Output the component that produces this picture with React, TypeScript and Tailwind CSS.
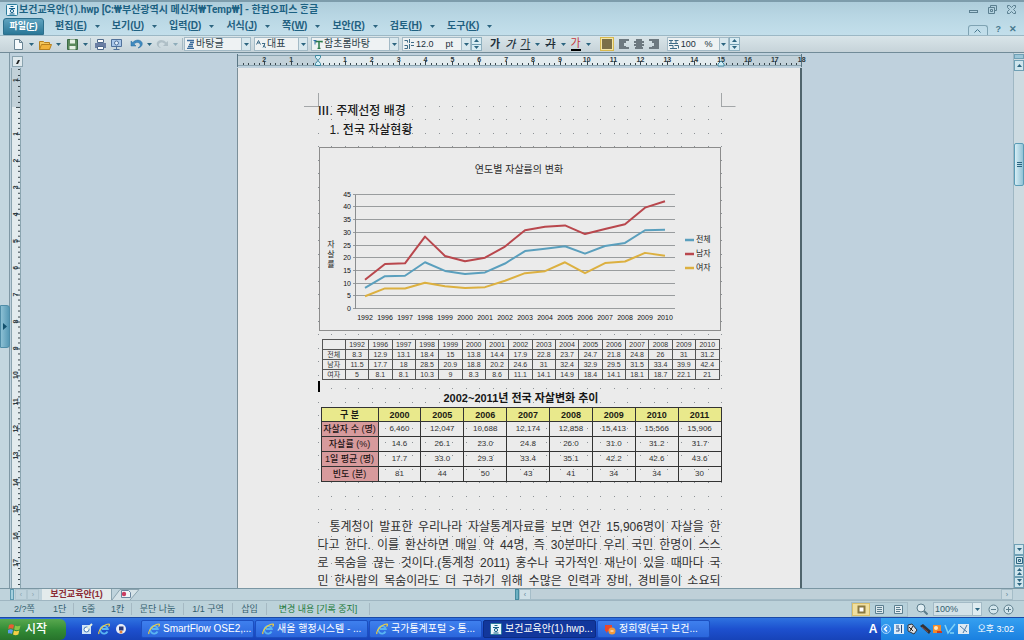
import type { ReactNode } from "react";
import clsx from "clsx";

const years = ["1992", "1996", "1997", "1998", "1999", "2000", "2001", "2002", "2003", "2004", "2005", "2006", "2007", "2008", "2009", "2010"];

const series = [
  { name: "전체", color: "#5a9fbd", values: [8.3, 12.9, 13.1, 18.4, 15, 13.8, 14.4, 17.9, 22.8, 23.7, 24.7, 21.8, 24.8, 26, 31, 31.2] },
  { name: "남자", color: "#b9474d", values: [11.5, 17.7, 18, 28.5, 20.9, 18.8, 20.2, 24.6, 31, 32.4, 32.9, 29.5, 31.5, 33.4, 39.9, 42.4] },
  { name: "여자", color: "#dcb040", values: [5, 8.1, 8.1, 10.3, 9, 8.3, 8.6, 11.1, 14.1, 14.9, 18.4, 14.1, 18.1, 18.7, 22.1, 21] },
];

const trendYears = ["2000", "2005", "2006", "2007", "2008", "2009", "2010", "2011"];
const trendRows = [
  { label: "자살자 수 (명)", values: ["6,460", "12,047", "10,688", "12,174", "12,858", "15,413", "15,566", "15,906"] },
  { label: "자살률 (%)", values: ["14.6", "26.1", "23.0", "24.8", "26.0", "31.0", "31.2", "31.7"] },
  { label: "1일 평균 (명)", values: ["17.7", "33.0", "29.3", "33.4", "35.1", "42.2", "42.6", "43.6"] },
  { label: "빈도 (분)", values: ["81", "44", "50", "43", "41", "34", "34", "30"] },
];

const menus = [
  ["편집", "E"],
  ["보기", "U"],
  ["입력", "D"],
  ["서식", "J"],
  ["쪽", "W"],
  ["보안", "R"],
  ["검토", "H"],
  ["도구", "K"],
];

const bodyLines = [
  "통계청이 발표한 우리나라 자살통계자료를 보면 연간 15,906명이 자살을 한",
  "다고 한다. 이를 환산하면 매일 약 44명, 즉 30분마다 우리 국민 한명이 스스",
  "로 목숨을 끊는 것이다.(통계청 2011) 홍수나 국가적인 재난이 있을 때마다 국",
  "민 한사람의 목숨이라도 더 구하기 위해 수많은 인력과 장비, 경비들이 소요되",
];

// one ruler centimetre on screen
const UNIT = 26.87;

function Arrow({ up = false, className = "" }: { up?: boolean; className?: string }) {
  return (
    <svg viewBox="0 0 5 3" className={clsx("h-[3px] w-[5px] shrink-0 fill-[#2c6580]", className)}>
      <path d={up ? "M0 3h5L2.5 0z" : "M0 0h5L2.5 3z"} />
    </svg>
  );
}

function HwpIcon() {
  return (
    <svg viewBox="0 0 12 12" className="h-3 w-3 shrink-0">
      <rect x=".5" y=".5" width="11" height="11" rx="1" fill="#e9f6fb" stroke="#2b7c9d" />
      <path d="M4.500 2.500h3M3 4.500h6M3.500 10h5" stroke="#14608a" fill="none" />
      <circle cx="6" cy="7" r="1.600" fill="none" stroke="#14608a" />
    </svg>
  );
}

function TitleBar() {
  return (
    <header className="flex h-[17px] items-center border-t-2 border-[#7d9cab] bg-gradient-to-b from-[#aecddb] to-[#b9d7e4] pr-2 pl-[6px]">
      <HwpIcon />
      <h1 className="ml-px font-['Roboto','Noto_Sans_CJK_KR',sans-serif] text-[10px] leading-3 font-bold whitespace-nowrap text-[#1c6182]">
        보건교육안(1).hwp [C:₩부산광역시 메신저₩Temp₩] - 한컴오피스 ᄒᆞᆫ글
      </h1>
      <div className="ml-auto flex items-center gap-[10px]">
        <button aria-label="최소화">
          <svg viewBox="0 0 9 9" className="h-[9px] w-[9px] fill-none stroke-[#5b7f90]">
            <rect x=".5" y="5.5" width="8" height="2" />
          </svg>
        </button>
        <button aria-label="이전 크기로">
          <svg viewBox="0 0 9 9" className="h-[9px] w-[9px] fill-none stroke-[#5b7f90]">
            <path d="M2.5 2.5v-2h6v5h-2M.5 2.5h6v6h-6zM2.5 4.5h2v2h-2z" />
          </svg>
        </button>
        <button aria-label="닫기">
          <svg viewBox="0 0 9 9" className="h-[9px] w-[9px] fill-none stroke-[#5b7f90]">
            <path d="M.5 .5h2l2 2 2-2h2v2l-2 2 2 2v2h-2l-2-2-2 2h-2v-2l2-2-2-2z" />
          </svg>
        </button>
      </div>
    </header>
  );
}

function MenuBar() {
  return (
    <nav className="flex h-[18px] items-center bg-gradient-to-b from-[#b9d7e4] to-[#c3dfeb] pr-[7px] pl-[3px] text-[10px] leading-3 font-semibold text-[#1f6080]">
      <button className="h-[17px] w-[41px] rounded-t-[3px] border border-[#2c6f8c] bg-gradient-to-b from-[#5ea3c0] to-[#2a7898] text-[9px] text-white">
        파일(<u>F</u>)
      </button>
      <div className="ml-[11px] flex gap-3">
        {menus.map(([name, key]) => (
          <button key={key} className="flex items-center gap-2 whitespace-nowrap">
            <span>
              {name}(<u>{key}</u>)
            </span>
            <Arrow />
          </button>
        ))}
      </div>
      <div className="ml-auto flex items-end gap-2 self-stretch text-[#47788e]">
        <button aria-label="도구 상자 접기" className="flex h-[10px] w-[20px] items-center justify-center rounded-t-[3px] border border-b-0 border-[#7fa3b3]">
          <svg viewBox="0 0 7 4" className="h-1 w-[7px] fill-none stroke-[#47788e]">
            <path d="M.5 3.5l3-3 3 3" />
          </svg>
        </button>
        <button className="text-[9px] leading-3">?</button>
        <button aria-label="문서 닫기" className="text-[9px] leading-3">
          ✕
        </button>
      </div>
    </nav>
  );
}

function Separator() {
  return <span className="h-3 w-px shrink-0 bg-[#a5b9c3]" />;
}

function IconButton({ label, arrow = false, dim = false, children }: { label: string; arrow?: boolean; dim?: boolean; children: ReactNode }) {
  return (
    <button aria-label={label} className={clsx("flex shrink-0 items-center gap-1", dim && "opacity-40")}>
      <svg viewBox="0 0 13 13" className="h-[13px] w-[13px]">
        {children}
      </svg>
      {arrow && <Arrow />}
    </button>
  );
}

function Combo({ label, value, icon, className }: { label: string; value: string; icon: ReactNode; className: string }) {
  return (
    <label className={clsx("flex h-[14px] shrink-0 items-center border border-[#a3bac6] bg-[#eef2f3] pl-px", className)}>
      {icon}
      <select aria-label={label} className="min-w-0 flex-1 appearance-none bg-transparent pl-px text-[10px] leading-3 text-[#2d3f49] outline-none">
        <option>{value}</option>
      </select>
      <span className="flex h-full w-[9px] items-center justify-center border-l border-[#a3bac6] bg-[#d8e8ee]">
        <Arrow />
      </span>
    </label>
  );
}

function Spinner({ label }: { label: string }) {
  return (
    <div className="flex h-[14px] w-[11px] shrink-0 flex-col border border-[#8fb0bf] bg-[#d8ecf3]">
      <button aria-label={label + " 늘리기"} className="flex flex-1 items-center justify-center border-b border-[#6f9cb0]">
        <Arrow up />
      </button>
      <button aria-label={label + " 줄이기"} className="flex flex-1 items-center justify-center">
        <Arrow />
      </button>
    </div>
  );
}

function ToolBar() {
  return (
    <div className="flex h-[18px] items-center border-t border-b border-t-[#9cb8c5] border-b-[#718b98] bg-gradient-to-b from-[#d9e5e9] to-[#c6d3d9] pl-3 text-[#22303a]">
      <div className="flex items-center gap-[5px]">
        <IconButton label="새 문서" arrow>
          <path d="M2.5 1.5h5l3 3v7h-8zM7.5 1.5v3h3" fill="#f6fafc" stroke="#6a8494" />
        </IconButton>
        <IconButton label="불러오기" arrow>
          <path d="M.5 3.5h4l1 1h5v7h-10z" fill="#f3c65c" stroke="#b6801f" />
          <path d="M.5 11.5l2-5h10l-2 5z" fill="#f0b23a" stroke="#b6801f" />
        </IconButton>
        <IconButton label="저장하기" arrow>
          <path d="M1.5 1.5h10v10h-10z" fill="#5c8a5d" stroke="#3b6a45" />
          <path d="M4 1.5h5v4H4zM3.5 8h6v3.5h-6z" fill="#e7f1e6" />
        </IconButton>
      </div>
      <div className="ml-[2px] flex items-center gap-[3px]">
        <Separator />
        <IconButton label="인쇄">
          <path d="M3.5 1.5h6v3h-6z" fill="#fff" stroke="#4e6a8c" />
          <path d="M1 5h11v5H1z" fill="#6b7fa4" />
          <path d="M3.5 8.5h6v3h-6z" fill="#fff" stroke="#4e6a8c" />
        </IconButton>
        <IconButton label="미리 보기">
          <path d="M1.500 1.500h10v7h-10z" fill="#a9c7ea" stroke="#50719b" />
          <circle cx="6.500" cy="5" r="2" fill="#e7f2fc" stroke="#50719b" />
          <path d="M3.500 11.500h6M6.500 9v2" stroke="#50719b" />
        </IconButton>
      </div>
      <div className="ml-[7px] flex items-center gap-1">
        <IconButton label="되돌리기" arrow>
          <path d="M1 3v5h5L4 6c2-2 5-2 6 0s-1 3-2 4c3-.5 5-3 4-5.500C10.500 1.500 6 1 2.800 4.500z" fill="#3f8ac0" stroke="#246a9c" strokeWidth=".5" />
        </IconButton>
        <IconButton label="다시 실행" arrow dim>
          <path d="M12 3v5H7l2-2c-2-2-5-2-6 0s1 3 2 4c-3-.5-5-3-4-5.500C2.500 1.500 7 1 10.200 4.500z" fill="#7f949f" />
        </IconButton>
        <Separator />
      </div>
      <div className="ml-px flex items-center gap-[3px]">
        <Combo
          label="스타일"
          value="바탕글"
          className="w-[67px]"
          icon={
            <svg viewBox="0 0 9 10" className="h-[10px] w-[9px]">
              <path d="M1 1.500h7M4 3.500h4M3 5.500h4M2 7.500h5M1 9.500h7" stroke="#3b6c9c" strokeWidth="1.500" fill="none" />
            </svg>
          }
        />
        <Combo
          label="언어"
          value="대표"
          className="w-[54px]"
          icon={
            <svg viewBox="0 0 10 10" className="h-[10px] w-[10px] fill-none stroke-[#3d6b86]">
              <path d="M.5 5.500l2-4 2 4M1.500 4h2M6 4.500h3l-2 4M8 6l1.500 3" />
            </svg>
          }
        />
        <Combo
          label="글꼴"
          value="함초롬바탕"
          className="w-[88px]"
          icon={
            <svg viewBox="0 0 10 10" className="h-[10px] w-[10px] fill-none">
              <path d="M3 3.500v-1h6v1M6 2.500v7M4.500 9.500h3" stroke="#2c7a4b" strokeWidth="1.500" />
              <path d="M.5 1.500h3M2 1.500v4" stroke="#2f6fa8" />
            </svg>
          }
        />
        <div className="flex">
          <label className="flex h-[14px] w-[69px] items-center border border-[#a3bac6] bg-[#eef2f3] pl-px text-[9px] leading-3">
            <svg viewBox="0 0 10 10" className="h-[10px] w-[10px] shrink-0 fill-none stroke-[#3d6b86]">
              <path d="M.5 1.500h3v2M5.500 0v4M.5 6.500h3v3h-3M7 3.500h3M7 6.500h3M5.500 5v5" />
            </svg>
            <input aria-label="글자 크기" defaultValue="12.0" className="w-[22px] min-w-0 bg-transparent pl-[2px] outline-none" />
            <span className="ml-auto pr-2">pt</span>
            <span className="flex h-full w-[9px] items-center justify-center border-l border-[#a3bac6] bg-[#d8e8ee]">
              <Arrow />
            </span>
          </label>
          <Spinner label="글자 크기" />
        </div>
      </div>
      <div className="ml-2 flex items-center gap-[5px] text-[11px] leading-[13px]">
        <button className="font-bold">가</button>
        <button className="font-medium italic">가</button>
        <button className="flex items-center gap-[5px]">
          <span className="underline">가</span>
          <Arrow />
        </button>
        <button className="flex items-center gap-[5px]">
          <span className="font-medium line-through">가</span>
          <Arrow />
        </button>
        <button className="flex items-center gap-[5px]">
          <span className="border-b-2 border-black leading-[11px] text-[#c43a3f]">가</span>
          <Arrow />
        </button>
      </div>
      <div className="ml-[9px] flex items-center gap-[5px]">
        <button aria-label="양쪽 정렬" className="border border-[#d8b94e] bg-[#f3e6a6] p-px">
          <svg viewBox="0 0 10 10" className="h-[10px] w-[10px]">
            <path d="M0 0h10v10H0z" fill="#7b7048" />
          </svg>
        </button>
        <button aria-label="왼쪽 정렬">
          <svg viewBox="0 0 10 10" className="h-[10px] w-[10px] fill-[#6d7980]">
            <path d="M0 0h10v2H7v2H5v3h2v1h3v2H0z" />
          </svg>
        </button>
        <button aria-label="가운데 정렬">
          <svg viewBox="0 0 10 10" className="h-[10px] w-[10px] fill-[#6d7980]">
            <path d="M2 0h6v2h2v2H8v1h2v2H8v1h1v2H1V8h1V7H0V5h2V4H0V2h2z" />
          </svg>
        </button>
        <button aria-label="오른쪽 정렬">
          <svg viewBox="0 0 10 10" className="h-[10px] w-[10px] fill-[#6d7980]">
            <path d="M10 0H0v2h3v2h2v3H3v1H0v2h10z" />
          </svg>
        </button>
        <div className="ml-[3px] flex">
          <label className="flex h-[14px] w-[62px] items-center border border-[#a3bac6] bg-[#eef2f3] pl-px text-[9px] leading-3">
            <svg viewBox="0 0 10 10" className="h-[10px] w-[10px] shrink-0 fill-none stroke-[#3d6b86]">
              <path d="M0 1.500h4M5.500 1.500h4M2 1.500v3M7 1.500v3M0 4.500h9M0 6.500h4v3M5.500 6.500h4v3M1 9.500h7" />
            </svg>
            <input aria-label="줄 간격" defaultValue="100" className="w-[20px] min-w-0 bg-transparent pl-[2px] outline-none" />
            <span className="ml-auto pr-[6px]">%</span>
            <span className="flex h-full w-[9px] items-center justify-center border-l border-[#a3bac6] bg-[#d8e8ee]">
              <Arrow />
            </span>
          </label>
          <Spinner label="줄 간격" />
        </div>
      </div>
    </div>
  );
}

function HorizontalRuler() {
  const labels = Array.from({ length: 21 }, (_, i) => i - 2);
  const ticks = Array.from({ length: 105 }, (_, i) => i - 15);
  return (
    <svg viewBox="0 0 572 13" className="block h-[13px] w-[572px]">
      <path d="M0 2h565v9H0z" fill="#c2d1d9" />
      <path d="M81 2h403v9H81z" fill="#e3ebee" />
      <path d="M0 1.500h565M0 11.500h565" stroke="#8ba4b0" />
      {ticks.map((t) => (
        <rect key={t} x={Math.round(81 + (t * UNIT) / 5)} y={t % 5 === 0 ? 7 : 9} width="1" height={t % 5 === 0 ? 4 : 2} fill="#38454c" />
      ))}
      <path d="M.5 0v13M564.500 0v13" stroke="#5a7684" />
      {labels
        .filter((n) => n !== 0)
        .map((n) => (
          <text key={n} x={81 + n * UNIT} y="8" textAnchor="middle" fontSize="7" fontWeight="600" fill="#2c3940">
            {Math.abs(n)}
          </text>
        ))}
      <path d="M78.500 1.500h5v2l-2.500 3-2.500-3zM78.500 11.500h5v-2l-2.500-3-2.500 3zM484 7l3 3v2h-6v-2z" fill="#d4eef6" stroke="#3d869e" />
    </svg>
  );
}

function VerticalRuler() {
  const labels = Array.from({ length: 19 }, (_, i) => i - 1);
  const ticks = Array.from({ length: 97 }, (_, i) => i - 7);
  return (
    <svg viewBox="0 0 12 521" className="block h-[521px] w-3">
      <path d="M2 0h8v521H2z" fill="#e3ebee" />
      <path d="M2 0h8v39H2z" fill="#c2d1d9" />
      <path d="M1.500 0v521M10.500 0v521" stroke="#8ba4b0" />
      {ticks.map((t) => (
        <rect key={t} x={t % 5 === 0 ? 6 : 8} y={Math.round(39 + (t * UNIT) / 5)} width={t % 5 === 0 ? 4 : 2} height="1" fill="#38454c" />
      ))}
      {labels
        .filter((n) => n !== 0)
        .map((n) => (
          <text key={n} transform={`translate(8 ${39 + n * UNIT}) rotate(-90)`} textAnchor="middle" fontSize="7" fontWeight="600" fill="#2c3940">
            {Math.abs(n)}
          </text>
        ))}
    </svg>
  );
}

// layout grid dots and the corner marks of the text area
function PageGrid() {
  const rows = Array.from({ length: 36 }, (_, i) => i);
  const cols = Array.from({ length: 31 }, (_, i) => i);
  return (
    <svg viewBox="0 0 562 520" className="pointer-events-none absolute top-0 left-0 h-[520px] w-[562px]">
      {rows.map((r) =>
        cols.map((c) => (
          <rect key={r + "-" + c} x={Math.round(80 + (c * UNIT) / 2)} y={Math.round(38 + (r * UNIT) / 2)} width="1" height="1" fill="#8d9296" />
        ))
      )}
      <path d="M80.500 25v13.500M66 38.500h14M483.500 25v13.500h14" stroke="#a3a6a8" fill="none" />
    </svg>
  );
}

function Chart() {
  const px = (i: number) => 47 + i * 20;
  const py = (v: number) => 162 - v * 2.54;
  return (
    <svg viewBox="0 0 403 184" className="block h-[184px] w-full">
      <rect x="1.500" y=".5" width="401" height="183" fill="#ebebeb" stroke="#8c8c8c" />
      <text x="201" y="26" textAnchor="middle" fontSize="10" fill="#2b2b2b">
        연도별 자살률의 변화
      </text>
      {Array.from({ length: 10 }, (_, i) => i * 5).map((v) => (
        <g key={v}>
          <path d={`M35 ${Math.round(py(v)) - 0.5}H357`} stroke="#999c9e" />
          <text x="33" y={py(v) + 2} textAnchor="end" fontSize="7" fill="#111">
            {v}
          </text>
        </g>
      ))}
      <path d="M37.500 48v114" stroke="#8a8d8f" />
      {years.map((y, i) => (
        <text key={y} x={px(i)} y="173" textAnchor="middle" fontSize="7" fill="#111">
          {y}
        </text>
      ))}
      {["자", "살", "률"].map((c, i) => (
        <text key={c} x="13" y={100 + i * 10} textAnchor="middle" fontSize="8" fill="#222">
          {c}
        </text>
      ))}
      {series.map((s, k) => (
        <g key={s.name}>
          <polyline points={s.values.map((v, i) => `${px(i)},${py(v)}`).join(" ")} fill="none" stroke={s.color} strokeWidth="2" strokeLinejoin="round" />
          <path d={`M367 ${93 + k * 14}h9`} stroke={s.color} strokeWidth="2.500" />
          <text x="378" y={95 + k * 14} fontSize="8" fill="#222">
            {s.name}
          </text>
        </g>
      ))}
    </svg>
  );
}

function DataTable() {
  return (
    <table className="ml-1 w-[398px] table-fixed border-collapse bg-[#ebebeb] text-center text-[7px] leading-[9px] text-[#333]">
      <thead>
        <tr>
          <td className="h-[10px] border border-[#555] p-0"></td>
          {years.map((y) => (
            <th key={y} scope="col" className="border border-[#555] p-0 font-normal">
              {y}
            </th>
          ))}
        </tr>
      </thead>
      <tbody>
        {series.map((s) => (
          <tr key={s.name}>
            <th scope="row" className="h-[10px] border border-[#555] p-0 font-normal">
              {s.name}
            </th>
            {s.values.map((v, i) => (
              <td key={i} className="border border-[#555] p-0">
                {v}
              </td>
            ))}
          </tr>
        ))}
      </tbody>
    </table>
  );
}

function TrendTable() {
  return (
    <table className="ml-[3px] w-[401px] table-fixed border-collapse text-center text-[8px] leading-[12px] text-[#333]">
      <caption className="h-[18px] text-[11px] leading-[18px] font-bold text-[#161616]">2002~2011년 전국 자살변화 추이</caption>
      <thead>
        <tr className="bg-[#e9e98c] text-[9px] text-[#1c1c14]">
          <th scope="col" className="h-[14px] w-[57px] border border-[#333] p-0 font-semibold">
            구 분
          </th>
          {trendYears.map((y) => (
            <th key={y} scope="col" className="border border-[#333] p-0 font-bold">
              {y}
            </th>
          ))}
        </tr>
      </thead>
      <tbody>
        {trendRows.map((row) => (
          <tr key={row.label}>
            <th scope="row" className="h-[15px] border border-[#333] bg-[#d79a9c] p-0 text-[9px] font-medium whitespace-nowrap text-[#1c1414]">
              {row.label}
            </th>
            {row.values.map((v, i) => (
              <td key={i} className="border border-[#333] p-0">
                {v}
              </td>
            ))}
          </tr>
        ))}
      </tbody>
    </table>
  );
}

function Page() {
  return (
    <article className="relative min-h-0 w-[565px] flex-1 overflow-hidden border-r-2 border-l border-r-[#50656d] border-l-[#7b8f99] bg-[#ebebeb] pr-[79px] pl-[80px]">
      <PageGrid />
      <div className="relative">
        <h2 className="pt-[34px] text-[12px] leading-[19px] font-medium text-[#1b1b1b]">Ⅲ. 주제선정 배경</h2>
        <h3 className="pl-3 text-[12px] leading-[19px] font-medium text-[#1b1b1b]">1. 전국 자살현황</h3>
        <div className="pt-[7px] pb-2">
          <Chart />
        </div>
        <DataTable />
        <div className="mt-px h-[11px] w-[2px] bg-black"></div>
        <div className="-mt-[3px]">
          <TrendTable />
        </div>
        <div className="pt-9 text-[12px] leading-[18px] text-[#303030]">
          {bodyLines.map((line, i) => (
            <p key={i} className={clsx("whitespace-nowrap [text-align-last:justify]", i === 0 && "pl-3")}>
              {line}
            </p>
          ))}
        </div>
      </div>
    </article>
  );
}

function ScrollButton({ label, children }: { label: string; children: ReactNode }) {
  return (
    <button aria-label={label} className="flex h-[11px] w-full shrink-0 items-center justify-center border border-[#6fa0b5] bg-[#cfe5ed]">
      {children}
    </button>
  );
}

function VerticalScroll() {
  return (
    <div className="flex w-[11px] shrink-0 flex-col border-l border-[#9fb7c3] bg-[#cddbe1]">
      <div className="my-px h-[5px] border border-[#6fa0b5] bg-[#9cc6d8]"></div>
      <ScrollButton label="위로">
        <Arrow up />
      </ScrollButton>
      <button aria-label="스크롤 막대" className="mt-[72px] flex h-[43px] items-center justify-center rounded-[2px] border border-[#5a9cb6] bg-gradient-to-r from-[#d5edf5] to-[#92c3d6]">
        <svg viewBox="0 0 5 5" className="h-[5px] w-[5px] stroke-[#2c6580]">
          <path d="M0 .5h5M0 2.500h5M0 4.500h5" />
        </svg>
      </button>
      <div className="mt-auto">
        <ScrollButton label="아래로">
          <Arrow />
        </ScrollButton>
        <ScrollButton label="찾기 대상">
          <svg viewBox="0 0 7 7" className="h-[7px] w-[7px] fill-none stroke-[#2c6580]">
            <path d="M.5 .5h6v6h-6zM2.500 2.500h2v2h-2z" />
          </svg>
        </ScrollButton>
        <ScrollButton label="이전 쪽">
          <span className="flex flex-col gap-px">
            <Arrow up />
            <Arrow up />
          </span>
        </ScrollButton>
        <ScrollButton label="다음 쪽">
          <span className="flex flex-col gap-px">
            <Arrow />
            <Arrow />
          </span>
        </ScrollButton>
      </div>
    </div>
  );
}

function Workspace() {
  return (
    <main className="flex min-h-0 flex-1 overflow-hidden bg-[#bfd1dd]">
      <div className="w-[10px] shrink-0 border-r border-[#7f98a5] bg-[#c3d6df] pt-[252px]">
        <button aria-label="작업 창 펼치기" className="flex h-[43px] w-[10px] items-center justify-center rounded-r-[3px] border border-[#4f8da8] bg-gradient-to-r from-[#8cc0d4] to-[#5799b5]">
          <svg viewBox="0 0 4 7" className="h-[7px] w-1 fill-[#12506c]">
            <path d="M0 0v7l4-3.500z" />
          </svg>
        </button>
      </div>
      <div className="flex w-[13px] shrink-0 flex-col overflow-hidden">
        <button aria-label="탭 종류" className="mt-[3px] mb-px flex h-[11px] w-[11px] shrink-0 items-center justify-center self-end border border-[#8ba4b0] bg-[#dfe9ed]">
          <svg viewBox="0 0 4 4" className="h-1 w-1 fill-[#222]">
            <path d="M0 4h2l2-4H2z" />
          </svg>
        </button>
        <VerticalRuler />
      </div>
      <div className="flex min-w-0 flex-1 flex-col items-center overflow-hidden pl-[2px]">
        <div className="py-px pl-[7px]">
          <HorizontalRuler />
        </div>
        <Page />
      </div>
      <VerticalScroll />
    </main>
  );
}

function DocumentTabs() {
  return (
    <div className="flex h-3 items-stretch border-t border-[#7a96a3] bg-[#bfd3dc] pl-[10px]">
      <span className="w-1 border border-[#5f9ab0] bg-[#a5d0de]"></span>
      <button aria-label="이전 탭" className="ml-px w-3 border border-[#b0c6d0] text-[7px] leading-[8px] text-[#87a2af]">
        ‹
      </button>
      <button aria-label="다음 탭" className="w-3 border border-[#b0c6d0] text-[7px] leading-[8px] text-[#87a2af]">
        ›
      </button>
      <button className="ml-[3px] w-[70px] border-r border-[#8ba4b0] bg-[#e3ebec] text-[9px] leading-[11px] font-bold whitespace-nowrap text-[#8b2c34]">보건교육안(1)</button>
      <button aria-label="새 탭">
        <svg viewBox="0 0 28 11" className="h-[11px] w-[28px]">
          <path d="M0 11L8 .5h19L18 11" fill="#d5e2e7" stroke="#8ba4b0" />
          <path d="M9.500 1.500h7l2 2v5h-9z" fill="#f0f5f8" stroke="#6a86a0" />
          <circle cx="12" cy="5" r="2.200" fill="#c93c62" />
        </svg>
      </button>
      <div className="ml-auto flex w-[509px] items-stretch pr-[11px]">
        <span className="w-1 border border-[#458b9f] bg-[#6cb0c2]"></span>
        <button aria-label="왼쪽으로" className="w-3 border border-[#a5bdc8] bg-[#cfe0e7] text-[7px] leading-[8px] text-[#5b8294]">
          ‹
        </button>
        <div className="flex-1 border-b border-[#a5bdc8] bg-[#bfd0d8]"></div>
        <button aria-label="오른쪽으로" className="w-3 border border-[#a5bdc8] bg-[#c8d9e0] text-[7px] leading-[8px] text-[#5b8294]">
          ›
        </button>
      </div>
    </div>
  );
}

function StatusBar() {
  return (
    <footer className="flex h-[17px] items-center border-t border-[#9fb6c1] bg-[#bcd2da] pr-[10px] pl-[14px] text-[9px] leading-3 whitespace-nowrap text-[#34606f]">
      <span className="w-[39px]">2/?쪽</span>
      <span className="w-5">1단</span>
      <Separator />
      <span className="w-[37px] pl-2">5줄</span>
      <span className="w-[20px]">1칸</span>
      <Separator />
      <span className="w-[51px] text-center">문단 나눔</span>
      <Separator />
      <span className="w-[48px] text-center">1/1 구역</span>
      <Separator />
      <span className="w-[33px] text-center">삽입</span>
      <Separator />
      <span className="w-[102px] text-center text-[#237a3b]">변경 내용 [기록 중지]</span>
      <Separator />
      <div className="ml-auto flex items-center">
        <div className="flex border border-[#a5bdc8] bg-[#b6d0da]">
          <button aria-label="쪽 윤곽" className="flex h-[13px] w-[18px] items-center justify-center border border-[#d9bf6a] bg-[#f0dfa0]">
            <svg viewBox="0 0 9 9" className="h-[9px] w-[9px]">
              <path d="M.5 .5h8v8h-8z" fill="#8b7940" />
              <path d="M2.500 2.500h4v4h-4z" fill="#fff" />
            </svg>
          </button>
          <button aria-label="폭 맞춤" className="flex h-[13px] w-[19px] items-center justify-center">
            <svg viewBox="0 0 9 9" className="h-[9px] w-[9px] stroke-[#5c7f90]">
              <path d="M.5 .5h8v8h-8z" fill="#dce8ed" />
              <path d="M2 2.500h5M2 4.500h5M2 6.500h5" />
            </svg>
          </button>
          <button aria-label="쪽 맞춤" className="flex h-[13px] w-[18px] items-center justify-center">
            <svg viewBox="0 0 9 9" className="h-[9px] w-[9px] stroke-[#5c7f90]">
              <path d="M.5 .5h8v8h-8z" fill="#e6eff3" />
              <path d="M2 2.500h4M2 4.500h5M2 6.500h4" />
            </svg>
          </button>
        </div>
        <svg viewBox="0 0 12 12" className="mr-[5px] ml-2 h-3 w-3 fill-none stroke-[#5b7c8b]">
          <circle cx="5" cy="5" r="4" fill="#e1eef3" />
          <path d="M8 8l3.500 3.500" strokeWidth="2" />
        </svg>
        <label className="flex h-[14px] w-[49px] items-center border border-[#a3bac6] bg-[#d3e2e8]">
          <select aria-label="화면 확대" className="min-w-0 flex-1 appearance-none bg-transparent pl-px text-[9px] leading-3 outline-none">
            <option>100%</option>
          </select>
          <span className="flex h-full w-[9px] items-center justify-center border-l border-[#a3bac6] bg-[#dfecf1]">
            <Arrow />
          </span>
        </label>
        <div className="ml-[6px] flex gap-1">
          <button aria-label="축소">
            <svg viewBox="0 0 11 11" className="h-[11px] w-[11px] fill-[#d3e6ed] stroke-[#5b7c8b]">
              <circle cx="5.500" cy="5.500" r="4.500" />
              <path d="M3 5.500h5" />
            </svg>
          </button>
          <button aria-label="확대">
            <svg viewBox="0 0 11 11" className="h-[11px] w-[11px] fill-[#d3e6ed] stroke-[#5b7c8b]">
              <circle cx="5.500" cy="5.500" r="4.500" />
              <path d="M3 5.500h5M5.500 3v5" />
            </svg>
          </button>
        </div>
      </div>
    </footer>
  );
}

function IeIcon() {
  return (
    <svg viewBox="0 0 12 12" className="h-3 w-3 shrink-0 fill-none">
      <path d="M9.500 8.500A3.800 3.800 0 1 1 9.800 6H4" stroke="#59b4f2" strokeWidth="1.800" />
      <path d="M1 11C-.5 8 6 1 11 1c1 1 0 2-.5 2.500" stroke="#f2cf3e" strokeWidth="1.200" />
    </svg>
  );
}

function Task({ title, active = false, icon }: { title: string; active?: boolean; icon: ReactNode }) {
  return (
    <button
      className={clsx(
        "flex h-[18px] max-w-[113px] min-w-0 flex-1 items-center gap-[3px] rounded-[2px] border px-[6px] text-[10px] leading-3 text-white",
        active ? "border-[#0c2c86] bg-[#12379c]" : "border-[#1c4fc0] bg-gradient-to-b from-[#3f80ee] to-[#2b66dc]"
      )}
    >
      {icon}
      <span className="whitespace-nowrap">{title}</span>
    </button>
  );
}

function TaskBar() {
  return (
    <div className="flex h-[23px] items-center border-t border-[#1b4aa6] bg-gradient-to-b from-[#2f72e0] via-[#1d50cf] to-[#1743b8]">
      <button className="flex h-[21px] w-[66px] items-center gap-1 rounded-r-[6px] bg-gradient-to-b from-[#58a84f] via-[#338c36] to-[#27732b] pl-2 text-[12px] leading-4 font-medium text-white">
        <svg viewBox="0 0 13 13" className="h-[13px] w-[13px]">
          <path d="M1 2c2-1.200 3.500-1 5 0l-.8 4c-1.500-1-3-1-5 0z" fill="#e85c34" />
          <path d="M7 2.500c1.500 1 3.500 1 5.500 0l-1 4c-2 1-3.500 1-5.300 0z" fill="#86c648" />
          <path d="M0 7c2-1 3.500-1 5 0l-1 4c-1.500-1-3-1-5 0z" fill="#5a9bea" />
          <path d="M6 7.500c1.500 1 3.500 1 5.300 0l-1 4c-2 1-3.500 1-5.300 0z" fill="#f4cf45" />
        </svg>
        시작
      </button>
      <div className="mr-[14px] ml-[15px] flex gap-[5px]">
        <button aria-label="바탕 화면 보기">
          <svg viewBox="0 0 12 12" className="h-3 w-3">
            <path d="M1 2h9v9H1z" fill="#cfe3f7" />
            <circle cx="5.500" cy="6.500" r="2.500" fill="#fff" stroke="#4278b6" />
            <path d="M6 6l5-5" stroke="#e6efe0" strokeWidth="2" />
          </svg>
        </button>
        <button aria-label="Internet Explorer">
          <IeIcon />
        </button>
        <button aria-label="미디어 재생기">
          <svg viewBox="0 0 12 12" className="h-3 w-3">
            <circle cx="6" cy="6" r="5" fill="#e9eef8" />
            <path d="M4 3.500h4.500v4H4z" fill="#2b3a7a" />
            <circle cx="6" cy="9" r="1.500" fill="#e07e38" />
          </svg>
        </button>
      </div>
      <div className="flex min-w-0 flex-1 gap-px">
        <Task title="SmartFlow OSE2,..." icon={<IeIcon />} />
        <Task title="새올 행정시스템 - ..." icon={<IeIcon />} />
        <Task title="국가통계포털 > 통..." icon={<IeIcon />} />
        <Task title="보건교육안(1).hwp..." active icon={<HwpIcon />} />
        <Task
          title="정희영(북구 보건..."
          icon={
            <svg viewBox="0 0 12 12" className="h-3 w-3 shrink-0">
              <path d="M1 2h7v6H4l-2 2V8H1z" fill="#e8482c" />
              <circle cx="8" cy="8" r="3.500" fill="#f39a3a" />
              <path d="M6.500 8h3" stroke="#fff" />
            </svg>
          }
        />
      </div>
      <div className="flex shrink-0 items-center text-white">
        <span className="mr-1 text-[12px] leading-4 font-bold">A</span>
        <div className="flex h-[22px] items-center gap-[2px] bg-gradient-to-b from-[#35a0f0] to-[#1a80e0] pr-[10px]">
          <button aria-label="숨겨진 아이콘 표시">
            <svg viewBox="0 0 10 10" className="h-[10px] w-[10px] fill-none">
              <circle cx="5" cy="5" r="4.500" fill="#3d95ee" stroke="#9ed0fb" />
              <path d="M6 2.500L3.500 5 6 7.500" stroke="#fff" strokeWidth="1.500" />
            </svg>
          </button>
          <svg viewBox="0 0 77 12" className="mr-[5px] h-3 w-[77px] fill-none">
            <path d="M1 1h10v10H1z" fill="#dcecf8" />
            <path d="M3 3h3M3 5h3v3H3M8.500 2v8" stroke="#274f88" />
            <path d="M15 2l4-1 5 6-3 4-6-3z" fill="#d9dde2" stroke="#30343a" />
            <path d="M16 4l4 4M20 3l-3 5" stroke="#222" />
            <path d="M27 3l3-2 8 7-2 3z" fill="#343033" />
            <path d="M29 4l6 5" stroke="#8b5149" />
            <path d="M40 2h8v8h-8z" fill="#f08b2c" />
            <circle cx="43" cy="5" r="2" fill="#fde7c0" />
            <path d="M44 9h5" stroke="#cc3a22" strokeWidth="2" />
            <path d="M52 2l3 8 7-9M57 10h4" stroke="#7fd2f8" strokeWidth="1.500" />
            <path d="M65 1h11v10H65z" fill="#dfeaf2" />
            <path d="M67 3l7 6M74 2l-4 8" stroke="#4b7ba8" />
          </svg>
          <time className="text-[9px] leading-3 whitespace-nowrap">오후 3:02</time>
        </div>
      </div>
    </div>
  );
}

export default function App() {
  return (
    <div className="flex h-screen flex-col overflow-hidden font-['Liberation_Sans','Noto_Sans_CJK_KR',sans-serif]">
      <TitleBar />
      <MenuBar />
      <ToolBar />
      <Workspace />
      <DocumentTabs />
      <StatusBar />
      <TaskBar />
    </div>
  );
}
